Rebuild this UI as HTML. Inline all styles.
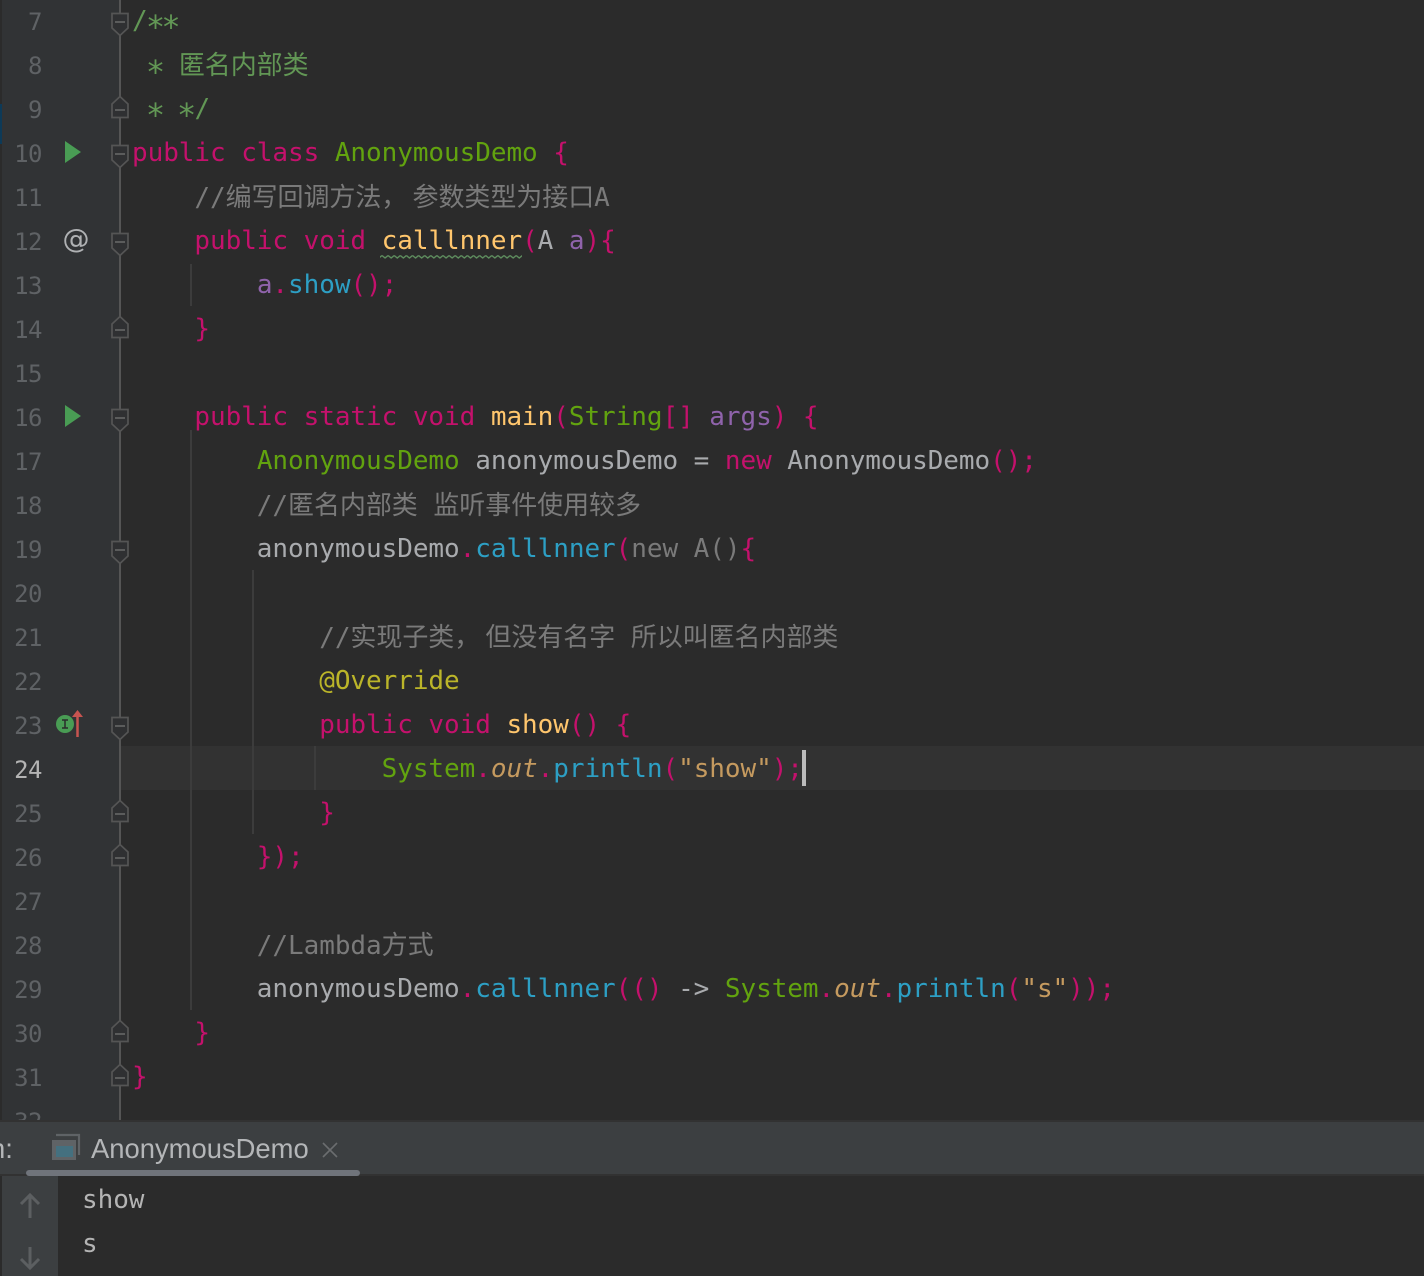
<!DOCTYPE html>
<html><head><meta charset="utf-8"><title>AnonymousDemo</title>
<style>
html,body{margin:0;padding:0;width:1424px;height:1276px;overflow:hidden;background:#2b2b2b}
#e{position:absolute;left:0;top:0;width:1424px;height:1120px;overflow:hidden;background:#2b2b2b}
.l{position:absolute;left:132px;height:44px;margin-top:1px;font:26px/44px "DejaVu Sans Mono","Noto Sans CJK SC",monospace;letter-spacing:-.052px;white-space:pre;color:#a9abae}
.m{margin-top:2px}
.n{position:absolute;left:-1px;width:43px;margin-top:2px;text-align:right;height:44px;font:24px/44px "DejaVu Sans Mono",monospace;letter-spacing:-.5px;color:#5f6265}
.k{color:#c4116c}.c{color:#62a30f}.d{color:#629755}.g{color:#7a7a7a}.f{color:#ffc66d}.b{color:#2d9fc4}.p{color:#8f63ab}.s{color:#c59a5f}.a{color:#bbb529}.i{font-style:italic}
.w{letter-spacing:5.2px}
.t{font-size:32px;line-height:0;letter-spacing:-3.66px;position:relative;top:8.5px;left:-1.8px}
</style></head><body>
<div id="e">
<div style="position:absolute;left:0;top:0;width:120px;height:1120px;background:#313335"></div>
<div style="position:absolute;left:0;top:0;width:2px;height:1120px;background:#2b2b2b"></div>
<div style="position:absolute;left:0;top:104px;width:2px;height:40px;background:#0d3a58"></div>
<div style="position:absolute;left:120px;top:746px;width:1304px;height:44px;background:#323232"></div>
<svg width="1424" height="1120" style="position:absolute;left:0;top:0">
<defs><pattern id="w" x="382" y="254" width="6.1" height="6" patternUnits="userSpaceOnUse"><path d="M0 1.500L3.050 4L6.100 1.500" fill="none" stroke="#5f8f5f" stroke-width="1.400"/></pattern></defs>
<g stroke="#3c3c3c" stroke-width="2" fill="none">
<path d="M191 264V306M191 430V1010M253 570V834M315 746V790"/>
</g>
<path d="M120 0V1120" stroke="#555" stroke-width="2"/>
<g fill="#2f3032" stroke="#555" stroke-width="1.7">
<path d="M112 13.500H128V28L120 35.500L112 28Z"/>
<path d="M112 145.500H128V160L120 167.500L112 160Z"/>
<path d="M112 233.500H128V248L120 255.500L112 248Z"/>
<path d="M112 409.500H128V424L120 431.500L112 424Z"/>
<path d="M112 541.500H128V556L120 563.500L112 556Z"/>
<path d="M112 717.500H128V732L120 739.500L112 732Z"/>
<path d="M112 117.500H128V104L120 96.500L112 104Z"/>
<path d="M112 337.500H128V324L120 316.500L112 324Z"/>
<path d="M112 821.500H128V808L120 800.500L112 808Z"/>
<path d="M112 865.500H128V852L120 844.500L112 852Z"/>
<path d="M112 1041.500H128V1028L120 1020.500L112 1028Z"/>
<path d="M112 1085.500H128V1072L120 1064.500L112 1072Z"/>
</g>
<path stroke="#6a6a6a" stroke-width="1.500" d="M115 22H125M115 154H125M115 242H125M115 418H125M115 550H125M115 726H125M115 110H125M115 330H125M115 814H125M115 858H125M115 1034H125M115 1078H125"/>
<path fill="#499c54" d="M65 141L81 152L65 163ZM65 405L81 416L65 427Z"/>
<circle cx="65" cy="724" r="9" fill="#499c54"/>
<path d="M62 720H68M65 720V728M62 728H68" stroke="#2b2b2b" stroke-width="1.500"/>
<path d="M77.500 737V717" stroke="#c75450" stroke-width="2.500"/>
<path d="M72 717L77.500 710L83 717Z" fill="#c75450"/>
<rect x="380" y="254" width="142" height="6" fill="url(#w)"/>
<text x="76" y="248" text-anchor="middle" font-family="DejaVu Sans, sans-serif" font-size="27" fill="#afb1b3">@</text>
</svg>
<div class="n" style="top:-2px">7</div>
<div class="n" style="top:42px">8</div>
<div class="n" style="top:86px">9</div>
<div class="n" style="top:130px">10</div>
<div class="n" style="top:174px">11</div>
<div class="n" style="top:218px">12</div>
<div class="n" style="top:262px">13</div>
<div class="n" style="top:306px">14</div>
<div class="n" style="top:350px">15</div>
<div class="n" style="top:394px">16</div>
<div class="n" style="top:438px">17</div>
<div class="n" style="top:482px">18</div>
<div class="n" style="top:526px">19</div>
<div class="n" style="top:570px">20</div>
<div class="n" style="top:614px">21</div>
<div class="n" style="top:658px">22</div>
<div class="n" style="top:702px">23</div>
<div class="n" style="top:746px;color:#b4b4b4">24</div>
<div class="n" style="top:790px">25</div>
<div class="n" style="top:834px">26</div>
<div class="n" style="top:878px">27</div>
<div class="n" style="top:922px">28</div>
<div class="n" style="top:966px">29</div>
<div class="n" style="top:1010px">30</div>
<div class="n" style="top:1054px">31</div>
<div class="n" style="top:1098px">32</div>
<div class="l d" style="top:-2px">/<span class="t">**</span></div>
<div class="l d m" style="top:42px"> <span class="t">*</span> 匿名内部类</div>
<div class="l d" style="top:86px"> <span class="t">*</span> <span class="t">*</span>/</div>
<div class="l" style="top:130px"><span class="k">public class</span> <span class="c">AnonymousDemo</span> <span class="k">{</span></div>
<div class="l g m" style="top:174px">    //编写回调方法<span class="w">，</span>参数类型为接口A</div>
<div class="l" style="top:218px">    <span class="k">public void</span> <span class="f">calllnner</span><span class="k">(</span>A <span class="p">a</span><span class="k">){</span></div>
<div class="l" style="top:262px">        <span class="p">a</span><span class="k">.</span><span class="b">show</span><span class="k">();</span></div>
<div class="l k" style="top:306px">    }</div>
<div class="l" style="top:394px">    <span class="k">public static void</span> <span class="f">main</span><span class="k">(</span><span class="c">String</span><span class="k">[]</span> <span class="p">args</span><span class="k">) {</span></div>
<div class="l" style="top:438px">        <span class="c">AnonymousDemo</span> anonymousDemo = <span class="k">new</span> AnonymousDemo<span class="k">();</span></div>
<div class="l g m" style="top:482px">        //匿名内部类 监听事件使用较多</div>
<div class="l" style="top:526px">        anonymousDemo<span class="k">.</span><span class="b">calllnner</span><span class="k">(</span><span class="g">new A()</span><span class="k">{</span></div>
<div class="l g m" style="top:614px">            //实现子类<span class="w">，</span>但没有名字 所以叫匿名内部类</div>
<div class="l a" style="top:658px">            @Override</div>
<div class="l" style="top:702px">            <span class="k">public void</span> <span class="f">show</span><span class="k">() {</span></div>
<div class="l" style="top:746px">                <span class="c">System</span><span class="k">.</span><span class="s i">out</span><span class="k">.</span><span class="b">println</span><span class="k">(</span><span class="s">"show"</span><span class="k">);</span></div>
<div class="l k" style="top:790px">            }</div>
<div class="l k" style="top:834px">        });</div>
<div class="l g m" style="top:922px">        //Lambda方式</div>
<div class="l" style="top:966px">        anonymousDemo<span class="k">.</span><span class="b">calllnner</span><span class="k">(()</span> -&gt; <span class="c">System</span><span class="k">.</span><span class="s i">out</span><span class="k">.</span><span class="b">println</span><span class="k">(</span><span class="s">"s"</span><span class="k">));</span></div>
<div class="l k" style="top:1010px">    }</div>
<div class="l k" style="top:1054px">}</div>
<div style="position:absolute;left:802px;top:750px;width:4px;height:36px;background:#bbb"></div>
</div>
<div style="position:absolute;left:0;top:1120px;width:1424px;height:2px;background:#323232"></div>
<div style="position:absolute;left:0;top:1122px;width:1424px;height:52px;background:#3c3f41"></div>
<div style="position:absolute;left:2px;top:1174px;width:56px;height:102px;background:#3c3f41"></div>
<div style="position:absolute;left:0;top:1174px;width:2px;height:102px;background:#2b2b2b"></div>
<div style="position:absolute;left:0;top:1174px;width:1424px;height:2px;background:#323232"></div>
<div style="position:absolute;left:26px;top:1170px;width:334px;height:6px;border-radius:3px;background:#70747b"></div>
<div style="position:absolute;left:-10px;top:1132px;font:27.4px/34px 'Liberation Sans',sans-serif;color:#b4b6b8">n:</div>
<div style="position:absolute;left:91px;top:1132px;font:27.4px/34px 'Liberation Sans',sans-serif;color:#b4b6b8;white-space:pre">AnonymousDemo</div>
<svg width="1424" height="156" style="position:absolute;left:0;top:1120px">
<path d="M56 15H79V35" fill="none" stroke="#5f6366" stroke-width="2.200"/>
<rect x="52" y="20" width="24" height="20" fill="#5f6366"/>
<rect x="56" y="26" width="17" height="11" fill="#44707f"/>
<path d="M323 23L337 37M337 23L323 37" stroke="#6b6d6f" stroke-width="1.600"/>
<path d="M30 98V75M21 84L30 75L39 84" fill="none" stroke="#5c5f61" stroke-width="3"/>
<path d="M30 127V148M21 139L30 148L39 139" fill="none" stroke="#5c5f61" stroke-width="3"/>
</svg>
<div class="l" style="left:82px;top:1177px;color:#b4b4b4">show</div>
<div class="l" style="left:82px;top:1221px;color:#b4b4b4">s</div>
</body></html>
